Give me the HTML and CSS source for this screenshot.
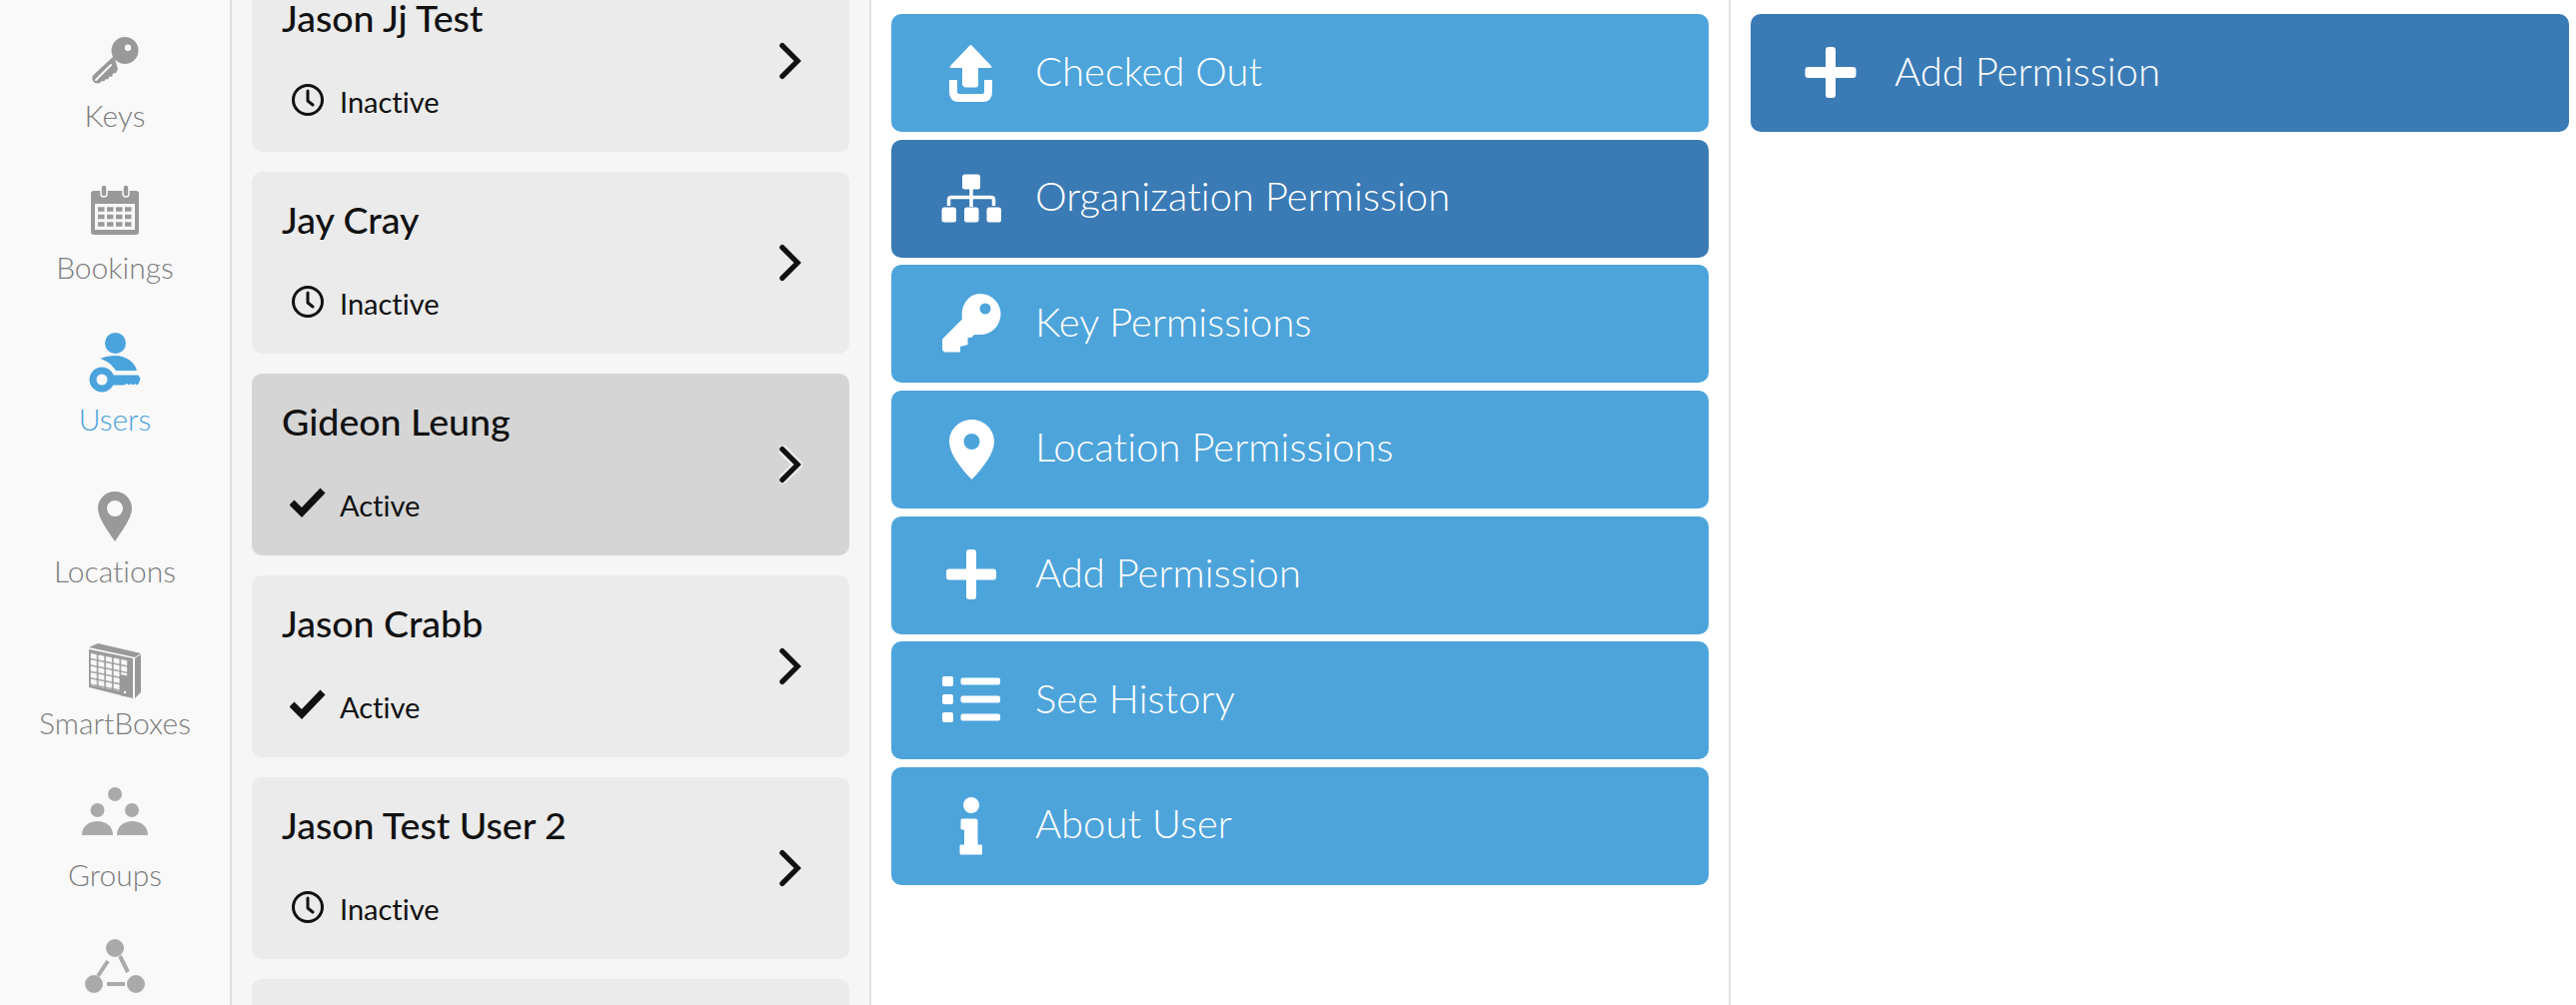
FILE: index.html
```html
<!DOCTYPE html>
<html lang="en">
<head>
<meta charset="utf-8">
<title>Users</title>
<link rel="stylesheet" href="styles.css">
</head>
<body>
<div class="app">
  <nav class="sidebar">
    <a class="nav-item">
      <svg class="nav-icon" viewBox="0 0 80 80"><path fill="#999" fill-rule="evenodd" d="M50 20a13.500 13.500 0 1 1 0 27 13.500 13.500 0 0 1 0-27zm3 7.500a3.200 3.200 0 1 0 0 6.400 3.200 3.200 0 0 0 0-6.400z"/><path fill="#999" d="M39 39L18.500 58c-1.500 1.500-1.500 4-.5 6 1.500 2.500 4.500 3 7 2l2-2 2 .5 2-2.500 2 .5 1.500-3 2.500 .5 1-3.500 3-.5 2-4z"/><path stroke="#f9f9f9" stroke-width="2" stroke-linecap="round" d="M21 63l15-15"/></svg>
      <span class="nav-label">Keys</span>
    </a>
    <a class="nav-item">
      <svg class="nav-icon" viewBox="0 0 80 80"><rect x="16" y="22" width="48" height="44" rx="3" fill="#999"/><rect x="26" y="16" width="6" height="12" rx="3" fill="#999" stroke="#f9f9f9" stroke-width="1.500"/><rect x="48" y="16" width="6" height="12" rx="3" fill="#999" stroke="#f9f9f9" stroke-width="1.500"/><rect x="20" y="35" width="40" height="26" fill="#f9f9f9"/><path stroke="#999" stroke-width="4.500" stroke-dasharray="6.500 2.500" d="M23 40.500h35M23 48h35M23 55.500h35"/></svg>
      <span class="nav-label">Bookings</span>
    </a>
    <a class="nav-item nav-item-active">
      <svg class="nav-icon" viewBox="0 0 80 80"><g fill="#4aa3dd"><circle cx="40.500" cy="22.500" r="10.500"/><path d="M25 38C30 36 35 35 40 35 52 35 60 42 62 50H41C37 44 32 40 25 38z"/><path fill-rule="evenodd" d="M27 46.500a12.500 12.500 0 1 1 0 25 12.500 12.500 0 0 1 0-25zm0 7a5.500 5.500 0 1 0 0 11 5.500 5.500 0 0 0 0-11z"/><path d="M36 54.500H63.500L65.500 58 64 62.500 62 64.500 60 63 58 64.500 56 63 54 64.500 52 63 49 64.500H36z"/></g></svg>
      <span class="nav-label">Users</span>
    </a>
    <a class="nav-item">
      <svg class="nav-icon" viewBox="0 0 80 80"><path fill="#999" fill-rule="evenodd" d="M40 19c9.500 0 17 7.500 17 17 0 9-9 21-17 33-8-12-17-24-17-33 0-9.500 7.500-17 17-17zm0 9a8 8 0 1 0 0 16 8 8 0 0 0 0-16z"/></svg>
      <span class="nav-label">Locations</span>
    </a>
    <a class="nav-item">
      <svg class="nav-icon" viewBox="0 0 80 80">
        <defs><pattern id="cells" width="7.600" height="6.400" patternUnits="userSpaceOnUse"><rect x=".8" y=".8" width="6" height="5" fill="#f9f9f9"/></pattern></defs>
        <path fill="#999" d="M23 19l43 10-6 4-46-10zM14 25l44 9v40l-44-11zM60 34l6-4v38l-6 6z"/>
        <g transform="matrix(1 .2 0 1 15 28)"><rect width="38" height="33" fill="url(#cells)"/></g>
        <path fill="#999" d="M45 50l8 1.600v21l-8-1.600z"/>
        <circle cx="50" cy="68" r="1.200" fill="#f9f9f9"/>
      </svg>
      <span class="nav-label">SmartBoxes</span>
    </a>
    <a class="nav-item">
      <svg class="nav-icon" viewBox="0 0 80 80"><g fill="#aaa"><circle cx="40" cy="18" r="7"/><circle cx="22.500" cy="34" r="7"/><circle cx="57" cy="34" r="7"/><path d="M7 59c0-9 7-14 15.500-14S38 50 38 59zM42 59c0-9 7-14 15.500-14S73 50 73 59z"/></g></svg>
      <span class="nav-label">Groups</span>
    </a>
    <a class="nav-item">
      <svg class="nav-icon" viewBox="0 0 80 80"><g fill="#aaa"><circle cx="40" cy="20" r="9"/><circle cx="19" cy="56" r="9"/><circle cx="61" cy="56" r="9"/></g><path stroke="#aaa" stroke-width="4" d="M33 33L23 48M45 28l8 16M32 56h18"/></svg>
    </a>
  </nav>

  <section class="user-list">
    <article class="user-card">
      <div class="user-info">
        <h2 class="user-name">Jason Jj Test</h2>
        <div class="user-status"><svg class="status-icon" viewBox="0 0 36 36"><circle cx="18" cy="17" r="14.500" fill="none" stroke="#111" stroke-width="3"/><path fill="none" stroke="#111" stroke-width="3" stroke-linecap="round" stroke-linejoin="round" d="M18 8v10l5 4"/></svg><span>Inactive</span></div>
      </div>
      <svg class="chevron" viewBox="0 0 24 38"><path fill="none" stroke="#111" stroke-width="5.500" stroke-linecap="round" d="M3 3l16 16L3 35"/></svg>
    </article>
    <article class="user-card">
      <div class="user-info">
        <h2 class="user-name">Jay Cray</h2>
        <div class="user-status"><svg class="status-icon" viewBox="0 0 36 36"><circle cx="18" cy="17" r="14.500" fill="none" stroke="#111" stroke-width="3"/><path fill="none" stroke="#111" stroke-width="3" stroke-linecap="round" stroke-linejoin="round" d="M18 8v10l5 4"/></svg><span>Inactive</span></div>
      </div>
      <svg class="chevron" viewBox="0 0 24 38"><path fill="none" stroke="#111" stroke-width="5.500" stroke-linecap="round" d="M3 3l16 16L3 35"/></svg>
    </article>
    <article class="user-card user-card-selected">
      <div class="user-info">
        <h2 class="user-name">Gideon Leung</h2>
        <div class="user-status"><svg class="status-icon" viewBox="0 0 36 36"><path fill="none" stroke="#111" stroke-width="7" d="M2 16l10 10L33 4"/></svg><span>Active</span></div>
      </div>
      <svg class="chevron" viewBox="0 0 24 38"><path fill="none" stroke="#eee" stroke-width="10" stroke-linecap="round" d="M3.500 3.500l15.500 15.500L3.500 34.500"/><path fill="none" stroke="#111" stroke-width="5.500" stroke-linecap="round" d="M3 3l16 16L3 35"/></svg>
    </article>
    <article class="user-card">
      <div class="user-info">
        <h2 class="user-name">Jason Crabb</h2>
        <div class="user-status"><svg class="status-icon" viewBox="0 0 36 36"><path fill="none" stroke="#111" stroke-width="7" d="M2 16l10 10L33 4"/></svg><span>Active</span></div>
      </div>
      <svg class="chevron" viewBox="0 0 24 38"><path fill="none" stroke="#111" stroke-width="5.500" stroke-linecap="round" d="M3 3l16 16L3 35"/></svg>
    </article>
    <article class="user-card">
      <div class="user-info">
        <h2 class="user-name">Jason Test User 2</h2>
        <div class="user-status"><svg class="status-icon" viewBox="0 0 36 36"><circle cx="18" cy="17" r="14.500" fill="none" stroke="#111" stroke-width="3"/><path fill="none" stroke="#111" stroke-width="3" stroke-linecap="round" stroke-linejoin="round" d="M18 8v10l5 4"/></svg><span>Inactive</span></div>
      </div>
      <svg class="chevron" viewBox="0 0 24 38"><path fill="none" stroke="#111" stroke-width="5.500" stroke-linecap="round" d="M3 3l16 16L3 35"/></svg>
    </article>
    <article class="user-card"></article>
  </section>

  <section class="actions">
    <a class="action">
      <svg class="action-icon" viewBox="0 0 60 60"><g fill="#fff"><path d="M28 3c1-1.200 2-1.200 3 0l19 20c1 1.200.6 2-.8 2H37v17c0 1.500-1 2.500-2.500 2.500h-10C23 44.500 22 43.500 21 42V25H10c-1.500 0-2-1-1-2z"/></g><path fill="none" stroke="#fff" stroke-width="8" d="M12 37v12c0 4 2 6 6 6h23c4 0 6-2 6-6V37"/></svg>
      <span class="action-label">Checked Out</span>
    </a>
    <a class="action action-current">
      <svg class="action-icon" viewBox="0 0 60 60"><g fill="#fff"><rect x="21" y="5.500" width="18" height="15" rx="2.500"/><rect x=".5" y="38.500" width="14.500" height="15" rx="2.500"/><rect x="23" y="38.500" width="14.500" height="15" rx="2.500"/><rect x="45.500" y="38.500" width="14.500" height="15" rx="2.500"/></g><path fill="none" stroke="#fff" stroke-width="3.500" d="M30 20v18M7.500 37v-6q0-2.500 2.500-2.500h40q2.500 0 2.500 2.500v6"/></svg>
      <span class="action-label">Organization Permission</span>
    </a>
    <a class="action">
      <svg class="action-icon" viewBox="0 0 60 60"><path fill="#fff" fill-rule="evenodd" d="M39 0a20.500 20.500 0 0 1 0 41l-6 0-3 3h-3.500v7l-7.500 2v4c0 1-.5 1.500-1.500 1.500H4C2 58 1 57 1 55V47c0-1 .5-2 1-2.500l19-19C19 12 27 0 39 0zm5 9.500a5.500 5.500 0 1 0 0 11 5.500 5.500 0 0 0 0-11z"/></svg>
      <span class="action-label">Key Permissions</span>
    </a>
    <a class="action">
      <svg class="action-icon" viewBox="0 0 60 60"><path fill="#fff" fill-rule="evenodd" d="M30.500 0C43 0 53 10 53 22c0 12-11 26-22.500 38C19 48 8 34 8 22 8 10 18 0 30.500 0zm0 14a8 8 0 1 0 0 16 8 8 0 0 0 0-16z"/></svg>
      <span class="action-label">Location Permissions</span>
    </a>
    <a class="action">
      <svg class="action-icon" viewBox="0 0 60 60"><g fill="#fff"><rect x="25" y="4" width="10" height="50" rx="3"/><rect x="5" y="23.500" width="50" height="11" rx="3"/></g></svg>
      <span class="action-label">Add Permission</span>
    </a>
    <a class="action">
      <svg class="action-icon" viewBox="0 0 60 60"><g fill="#fff"><rect x="1" y="6" width="11" height="10" rx="2"/><rect x="1" y="24" width="11" height="10" rx="2"/><rect x="1" y="42" width="11" height="10" rx="2"/><rect x="19.500" y="7.500" width="39.500" height="7" rx="2"/><rect x="19.500" y="25.500" width="39.500" height="7" rx="2"/><rect x="19.500" y="43.500" width="39.500" height="7" rx="2"/></g></svg>
      <span class="action-label">See History</span>
    </a>
    <a class="action">
      <svg class="action-icon" viewBox="0 0 60 60"><g fill="#fff"><circle cx="30" cy="9" r="8"/><path d="M21 22.500h13c1.500 0 2.500 1 2.500 2.500v23.500h3c1 0 1.500 .5 1.500 1.500v7c0 1-.5 1.500-1.500 1.500h-19.500c-1 0-1.500-.5-1.500-1.500v-7c0-1 .5-1.500 1.500-1.500h3v-15h-2c-1 0-1.500-.5-1.500-1.500v-7.500c0-1 .5-2 1.500-2z"/></g></svg>
      <span class="action-label">About User</span>
    </a>
  </section>

  <section class="detail">
    <a class="action action-current">
      <svg class="action-icon" viewBox="0 0 60 60"><g fill="#fff"><rect x="25" y="4" width="10" height="51" rx="3"/><rect x="4.500" y="24" width="51" height="11" rx="3"/></g></svg>
      <span class="action-label">Add Permission</span>
    </a>
  </section>
</div>
</body>
</html>
```

FILE: styles.css
```css
* { box-sizing: border-box; }

html, body {
  margin: 0;
  height: 100%;
  overflow: hidden;
  background: #fff;
}

body {
  font-family: Lato, "Noto Sans", sans-serif;
  font-variant-ligatures: none;
  color: #111;
}

.app {
  display: flex;
  height: 1006px;
  overflow: hidden;
}

/* Left navigation rail */
.sidebar {
  flex: 0 0 232px;
  height: 1006px;
  padding-top: 17px;
  background: #f9f9f9;
  border-right: 2px solid #ddd;
  display: flex;
  flex-direction: column;
  align-items: center;
  overflow: hidden;
}

.nav-item {
  flex: 0 0 152px;
  display: flex;
  flex-direction: column;
  align-items: center;
  color: #7d7d7d;
}

.nav-item-active { color: #4aa3dd; }

.nav-icon {
  display: block;
  width: 80px;
  height: 80px;
  flex: none;
}

.nav-label {
  display: block;
  font-size: 30px;
  font-weight: 300;
  line-height: 36px;
}

/* User list */
.user-list {
  flex: 0 0 640px;
  height: 1006px;
  background: #f6f6f6;
  border-right: 2px solid #e2e2e2;
  padding: 0 20px;
  overflow: hidden;
}

.user-card {
  display: flex;
  align-items: center;
  justify-content: space-between;
  height: 182px;
  margin-bottom: 20px;
  padding: 0 47px 0 30px;
  background: #ebebeb;
  border-radius: 10px;
}

.user-card:first-child { margin-top: -30px; }

.user-card-selected { background: #d5d5d5; }

.user-info {
  align-self: flex-start;
  padding-top: 30px;
}

.user-name {
  margin: 0;
  font-size: 37.500px;
  font-weight: 500;
  line-height: 36px;
}

.user-status {
  display: flex;
  align-items: center;
  gap: 14px;
  height: 42px;
  margin-top: 44px;
  padding-left: 8px;
  font-size: 29px;
  font-weight: 400;
}

.status-icon {
  width: 36px;
  height: 36px;
  flex: none;
}

.chevron {
  width: 23px;
  height: 38px;
  flex: none;
}

/* Action columns */
.actions {
  flex: 0 0 860px;
  height: 1006px;
  padding: 14px 20px 0;
  border-right: 2px solid #e2e2e2;
  display: flex;
  flex-direction: column;
  gap: 7.670px;
}

.detail {
  flex: 1 1 auto;
  height: 1006px;
  padding: 14px 7px 0 20px;
}

.action {
  display: flex;
  align-items: center;
  gap: 34px;
  height: 118px;
  flex: none;
  padding-left: 50px;
  background: #4da4db;
  border-radius: 10px;
  color: #fff;
  font-size: 40px;
  font-weight: 300;
}

.action-current { background: #3a7ab5; }

.action-label { padding-bottom: 5px; }

.action-icon {
  width: 60px;
  height: 60px;
  flex: none;
}
```
